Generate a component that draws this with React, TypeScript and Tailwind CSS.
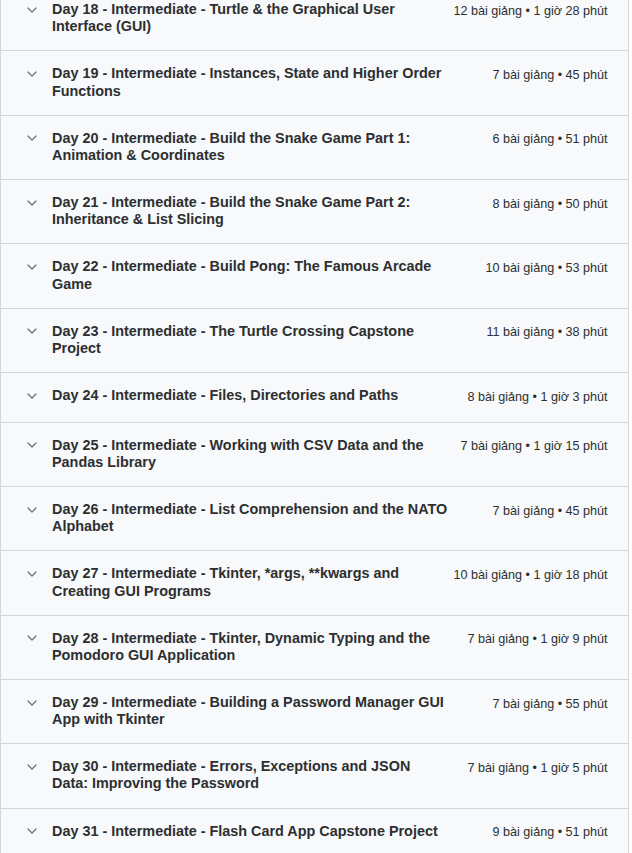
import React from "react";

const rows: { title: string; summary: string }[] = [
  { title: "Day 18 - Intermediate - Turtle & the Graphical User Interface (GUI)", summary: "12 bài giảng • 1 giờ 28 phút" },
  { title: "Day 19 - Intermediate - Instances, State and Higher Order Functions", summary: "7 bài giảng • 45 phút" },
  { title: "Day 20 - Intermediate - Build the Snake Game Part 1: Animation & Coordinates", summary: "6 bài giảng • 51 phút" },
  { title: "Day 21 - Intermediate - Build the Snake Game Part 2: Inheritance & List Slicing", summary: "8 bài giảng • 50 phút" },
  { title: "Day 22 - Intermediate - Build Pong: The Famous Arcade Game", summary: "10 bài giảng • 53 phút" },
  { title: "Day 23 - Intermediate - The Turtle Crossing Capstone Project", summary: "11 bài giảng • 38 phút" },
  { title: "Day 24 - Intermediate - Files, Directories and Paths", summary: "8 bài giảng • 1 giờ 3 phút" },
  { title: "Day 25 - Intermediate - Working with CSV Data and the Pandas Library", summary: "7 bài giảng • 1 giờ 15 phút" },
  { title: "Day 26 - Intermediate - List Comprehension and the NATO Alphabet", summary: "7 bài giảng • 45 phút" },
  { title: "Day 27 - Intermediate - Tkinter, *args, **kwargs and Creating GUI Programs", summary: "10 bài giảng • 1 giờ 18 phút" },
  { title: "Day 28 - Intermediate - Tkinter, Dynamic Typing and the Pomodoro GUI Application", summary: "7 bài giảng • 1 giờ 9 phút" },
  { title: "Day 29 - Intermediate - Building a Password Manager GUI App with Tkinter", summary: "7 bài giảng • 55 phút" },
  { title: "Day 30 - Intermediate - Errors, Exceptions and JSON Data: Improving the Password", summary: "7 bài giảng • 1 giờ 5 phút" },
  { title: "Day 31 - Intermediate - Flash Card App Capstone Project", summary: "9 bài giảng • 51 phút" },
];

function Chevron() {
  return (
    <svg width="10" height="6" viewBox="0 0 10 6" fill="none">
      <path d="M1 1 L5 5 L9 1" stroke="#6a6f73" strokeWidth="1.2" strokeLinecap="round" strokeLinejoin="round" />
    </svg>
  );
}

export default function App() {
  return (
    <div className="h-[853px] w-[632px] overflow-hidden bg-white" style={{ fontFamily: '"Liberation Sans", Arial, sans-serif' }}>
      <div className="-mt-[13px] w-[629px] border-x border-[#d1d7dc] bg-[#f7f9fa]">
        {rows.map((r, i) => (
          <div key={i} className="flex items-start border-b border-[#d1d7dc] pb-[14.75px] pl-[21.6px] pr-[20.4px] pt-[14px]">
            <div className="flex h-[17.28px] w-[19px] shrink-0 items-center justify-center">
              <Chevron />
            </div>
            <div className="ml-[10.4px] min-h-[20px] flex-1 text-[14.4px] font-bold leading-[17.28px] text-[#2d2f31]">
              {r.title}
            </div>
            <div className="ml-[28px] shrink-0 pt-[1.7px] text-[12.6px] leading-[17.28px] text-[#2d2f31]">
              {r.summary}
            </div>
          </div>
        ))}
      </div>
    </div>
  );
}
